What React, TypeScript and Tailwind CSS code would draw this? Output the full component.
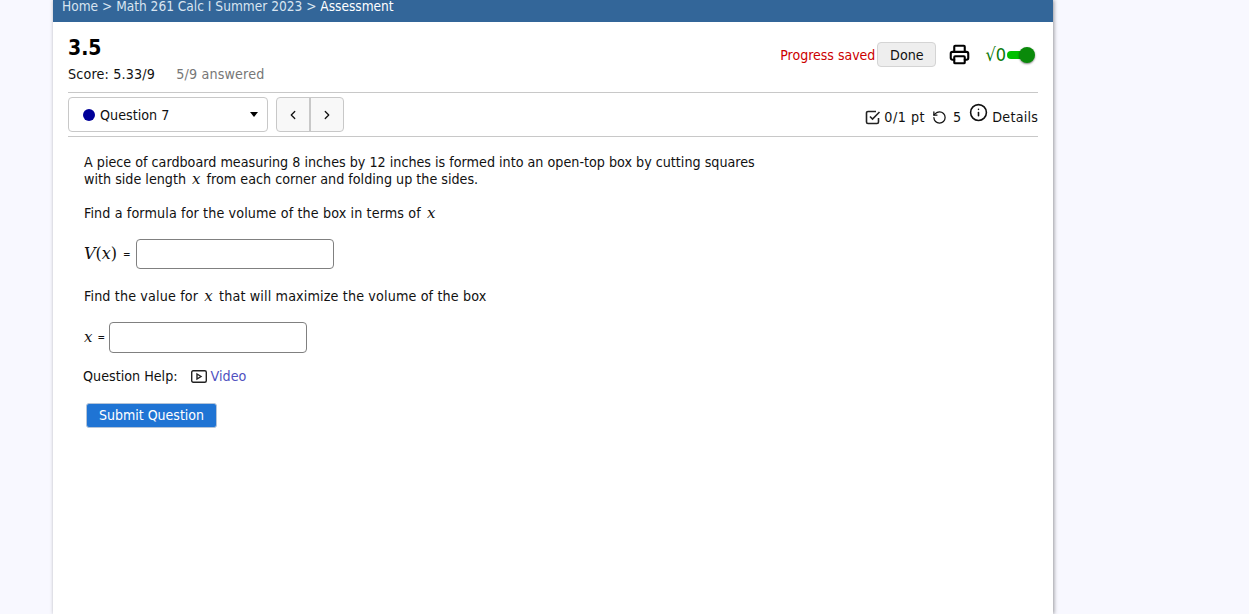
import { Printer, RotateCcw, Info, ChevronLeft, ChevronRight } from 'lucide-react';

const sans = { fontFamily: '"DejaVu Sans Condensed", "DejaVu Sans", Tahoma, sans-serif', fontStretch: 'condensed' };

function MathX() {
  return <span className="mx-[2px] font-['DejaVu_Serif',serif] text-[15px] leading-none font-stretch-normal italic">x</span>;
}

export default function App() {
  return (
    <div className="h-[614px] overflow-hidden bg-[#f8f8ff] text-[14.2px] text-[#111]" style={sans}>
      <div className="ml-[53px] h-[614px] w-[1000px] bg-white shadow-[1px_0_4px_rgba(0,0,0,0.4)]">
        {/* Breadcrumbs */}
        <div className="flex h-[22px] items-end overflow-hidden bg-[#336699] pb-[8px] pl-[9px] text-[13.6px] leading-[16px] text-[#d8e4f0]">
          <span className="whitespace-nowrap">Home &gt; Math 261 Calc I Summer 2023 &gt; <span className="text-white">Assessment</span></span>
        </div>

        <div className="px-[15px]">
          {/* Title row */}
          <div className="flex h-[71px] border-b border-[#c8c8c8]">
            <div className="flex-1 pt-[14px]">
              <h1 className="text-[21px] font-bold leading-[24px] text-black">3.5</h1>
              <div className="mt-[5px] flex gap-[21px] leading-[18px] tracking-[0.17px]">
                <span>Score: 5.33/9</span>
                <span className="text-[#777]">5/9 answered</span>
              </div>
            </div>
            <div className="flex h-[50px] items-center pt-[14px]">
              <span className="mt-[2px] text-[14px] text-[#cc0000]">Progress saved</span>
              <button className="ml-[2px] h-[25px] w-[59px] rounded-[4px] border border-[#d4d4d4] bg-[#eeeeee] pt-[2px] text-[#111]">Done</button>
              <Printer className="ml-[13px] h-[21px] w-[21px] text-black" strokeWidth={2.4} />
              <span className="ml-[15px] mt-[2px] font-['DejaVu_Sans',sans-serif] text-[18px] leading-none text-[#0a7a0a] [font-stretch:condensed]">√0</span>
              <span className="relative ml-[1px] mt-[2px] h-[8px] w-[20px] rounded-full bg-[#00c000]">
                <span className="absolute -right-[8px] -top-[4px] h-[16px] w-[16px] rounded-full bg-[#0a8a0a] shadow-[0_1px_2px_rgba(0,0,0,0.5)]" />
              </span>
              <span className="w-[11px]" />
            </div>
          </div>

          {/* Question nav */}
          <div className="flex h-[44px] items-center border-b border-[#c8c8c8]">
            <div className="flex h-[35px] w-[200px] items-center rounded-[4px] border border-[#c8c8c8] pl-[14px] pr-[9px]">
              <span className="h-[12px] w-[12px] rounded-full bg-[#000099]" />
              <span className="ml-[5px] flex-1 pt-[2px]">Question 7</span>
              <span className="h-0 w-0 border-x-[4px] border-t-[5px] border-x-transparent border-t-black" />
            </div>
            <div className="ml-[8px] flex h-[35px] w-[68px] rounded-[4px] border border-[#c8c8c8] bg-[#f8f8f8]">
              <span className="flex flex-1 items-center justify-center border-r-2 border-[#c8c8c8]"><ChevronLeft className="h-[14px] w-[14px]" strokeWidth={2.2} /></span>
              <span className="flex flex-1 items-center justify-center"><ChevronRight className="h-[14px] w-[14px]" strokeWidth={2.2} /></span>
            </div>
            <div className="ml-auto flex items-center pt-[7px] tracking-[0.2px]">
              <svg className="h-[16px] w-[16px] -translate-y-[1px]" viewBox="0 0 16 16" fill="none" stroke="#222" strokeWidth="1.6">
                <path d="M13.5 9v4a1.5 1.5 0 0 1-1.5 1.5H3A1.5 1.5 0 0 1 1.5 13V4A1.5 1.5 0 0 1 3 2.5h8" />
                <path d="M5 7.5l2.5 2.5L14.5 3" />
              </svg>
              <span className="ml-[3px] tracking-[0.5px]">0/1 pt</span>
              <RotateCcw className="ml-[7px] h-[15px] w-[15px] -translate-y-[1px]" strokeWidth={2} />
              <span className="ml-[6px]">5</span>
              <Info className="mb-[11px] ml-[8px] h-[19px] w-[19px]" strokeWidth={2} />
              <span className="ml-[4px]">Details</span>
            </div>
          </div>

          {/* Question body */}
          <div className="pl-[16px] pt-[17px] leading-[17px]">
            <p className="w-[680px]">
              A piece of cardboard measuring 8 inches by 12 inches is formed into an open-top box by cutting squares
              with side length <MathX /> from each corner and folding up the sides.
            </p>
            <p className="mt-[17px] tracking-[0.12px]">Find a formula for the volume of the box in terms of <MathX /></p>
            <div className="mt-[17px] flex items-center">
              <span className="font-['DejaVu_Serif',serif] text-[16px] leading-none font-stretch-normal italic">V<span className="not-italic">(</span>x<span className="not-italic">)</span></span>
              <span className="ml-[6px] mr-[5px] text-[10px]">=</span>
              <input type="text" className="h-[30px] w-[198px] rounded-[4px] border border-[#808080] bg-white" />
            </div>
            <p className="mt-[19px] tracking-[0.14px]">Find the value for <MathX /> that will maximize the volume of the box</p>
            <div className="mt-[17px] flex items-center">
              <span className="font-['DejaVu_Serif',serif] text-[15px] leading-none font-stretch-normal italic">x</span>
              <span className="ml-[5px] mr-[4px] text-[10px]">=</span>
              <input type="text" className="h-[31px] w-[198px] rounded-[4px] border border-[#808080] bg-white" />
            </div>
            <div className="-ml-[1px] mt-[14px] flex items-center leading-[18px]">
              <span>Question Help:</span>
              <svg className="ml-[13px] h-[13px] w-[16px]" viewBox="0 0 16 13" fill="none" stroke="#222" strokeWidth="1.4">
                <rect x="0.7" y="0.7" width="14.6" height="11.6" rx="1.5" />
                <path d="M6 4l4 2.5L6 9z" />
              </svg>
              <a className="ml-[4px] text-[#5050c0]">Video</a>
            </div>
            <button className="ml-[2px] mt-[18px] h-[25px] w-[131px] rounded-[3px] border border-[#b4c4d8] bg-[#1f74d4] text-[14px] text-white">Submit Question</button>
          </div>
        </div>
      </div>
    </div>
  );
}
